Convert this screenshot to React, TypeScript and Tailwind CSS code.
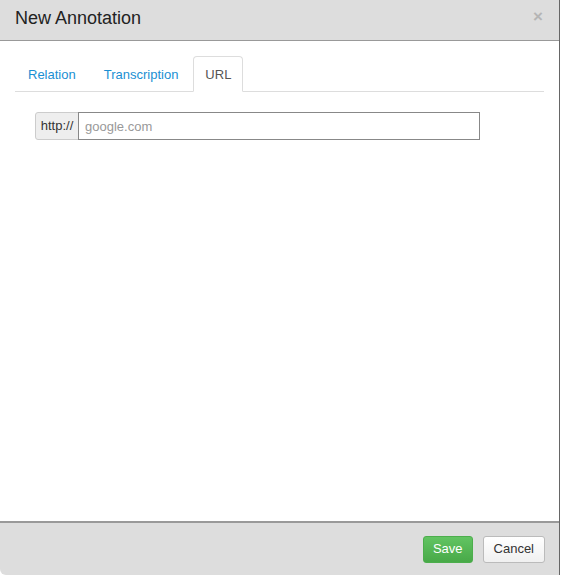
import React from 'react'

export default function App() {
  return (
    <div className="w-[561px] h-[575px] bg-white font-['Liberation_Sans',Arial,sans-serif] text-[13px] text-[#333]">
      <div className="w-[560px] h-[575px] flex flex-col border-r border-[#666] bg-white">
        {/* Header */}
        <div className="h-[41px] shrink-0 bg-[#dddddd] border-b border-[#999] flex items-center justify-between pl-[15px] pr-[16px]">
          <h3 className="text-[18px] leading-[20px] text-[#222] -mt-[4px]">New Annotation</h3>
          <button className="text-[#b5b5b5] font-bold text-[17px] leading-none -mt-[8px]">×</button>
        </div>

        {/* Body */}
        <div className="flex-1 px-[15px] pt-[15px]">
          <div className="flex items-end border-b border-[#ddd] h-[36px]">
            <a className="px-[13px] h-[35px] flex items-center pt-[2px] text-[#1a8fd3] cursor-pointer">Relation</a>
            <a className="px-[13px] ml-[2px] h-[35px] flex items-center pt-[2px] text-[#1a8fd3] cursor-pointer">Transcription</a>
            <a className="px-[11px] ml-[2px] h-[36px] -mb-px flex items-center pt-[2px] text-[#555] bg-white border border-[#ddd] border-b-white rounded-t-[4px]">URL</a>
          </div>

          <div className="flex mt-[20px] ml-[20px] h-[28px]">
            <span className="w-[44px] flex items-center justify-center bg-[#eee] border border-[#ccc] rounded-l-[3px] text-[#333]">http://</span>
            <input
              className="w-[402px] h-[28px] border border-[#888] -ml-px px-[6px] text-[13px] text-[#555] placeholder:text-[#999] outline-none"
              placeholder="google.com"
            />
          </div>
        </div>

        {/* Footer */}
        <div className="h-[54px] shrink-0 bg-[#dddddd] border-t-2 border-[#999] flex items-center justify-end pr-[14px] gap-[10px] rounded-bl-[6px]">
          <button className="h-[27px] px-[9px] rounded-[3px] border border-[#4cae4c] bg-gradient-to-b from-[#62c462] to-[#48a948] text-white text-[13px]">Save</button>
          <button className="h-[27px] px-[10px] rounded-[3px] border border-[#bbb] bg-gradient-to-b from-white to-[#f0f0f0] text-[#333] text-[13px]">Cancel</button>
        </div>
      </div>
    </div>
  )
}
